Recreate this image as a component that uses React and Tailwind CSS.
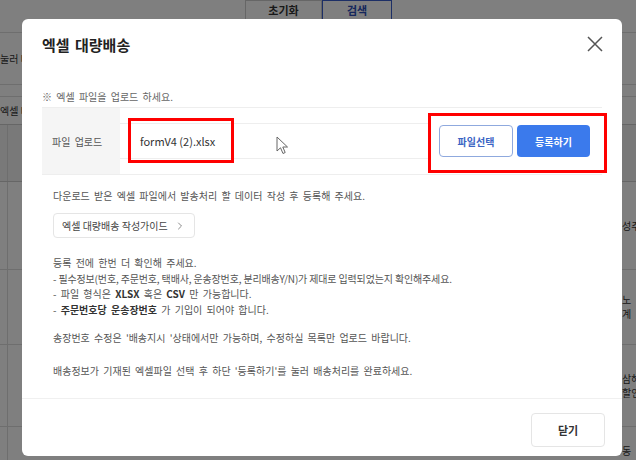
import React from 'react';
import { ChevronRight } from 'lucide-react';

const PageBehind = () => (
  <div className="w-full h-full bg-white text-[10px] text-[#333]">
    <div className="h-[33px] border-b border-[#ddd] flex pl-[245px]">
      <div className="w-[77px] h-[20px] border border-[#ccc] flex items-center justify-center font-bold text-[11px]">초기화</div>
      <div className="w-[70px] h-[20px] border border-[#3a5fcd] flex items-center justify-center font-bold text-[11px] text-[#2d4fb8]">검색</div>
    </div>
    <div className="h-[52px] border-b border-[#ddd] flex items-center pl-0">눌러 배송처리</div>
    <div className="h-[12px] border-b border-[#ddd]" />
    <div className="h-[28px] border-b border-[#ccc] flex items-center">엑셀 배송</div>
    <div className="h-[57px] border-b border-[#ccc] bg-[#f3f3f3] flex">
      <div className="w-[8px] border-r border-[#ddd]" />
    </div>
    <div className="h-[88px] border-b border-[#ddd] flex">
      <div className="w-[8px] border-r border-[#ddd]" />
      <div className="flex-1 flex justify-end items-center">
        <span className="w-[14px] overflow-hidden whitespace-nowrap">성주</span>
      </div>
    </div>
    <div className="h-[75px] border-b border-[#ddd] flex">
      <div className="w-[8px] border-r border-[#ddd]" />
      <div className="flex-1 flex justify-end items-center">
        <span className="w-[14px] overflow-hidden whitespace-nowrap leading-[14px]">노<br />계</span>
      </div>
    </div>
    <div className="h-[82px] border-b border-[#ddd] flex">
      <div className="w-[8px] border-r border-[#ddd]" />
      <div className="flex-1 flex justify-end items-center">
        <span className="w-[14px] overflow-hidden whitespace-nowrap leading-[14px]">삼해<br />할인</span>
      </div>
    </div>
    <div className="h-[33px] flex">
      <div className="w-[8px] border-r border-[#ddd]" />
      <div className="flex-1 flex justify-end items-end pb-[2px]">
        <span className="w-[14px] overflow-hidden whitespace-nowrap">동</span>
      </div>
    </div>
  </div>
);

const Cursor = () => (
  <svg width="13" height="19" viewBox="0 0 13 19" className="absolute left-[276px] top-[136px]">
    <path d="M1 1 L1 15 L4.5 11.8 L7 17.5 L9.2 16.5 L6.8 11 L11.5 11 Z" fill="#fff" stroke="#666" strokeWidth="1" strokeLinejoin="round" />
  </svg>
);

export default function App() {
  return (
    <div className="relative w-[636px] h-[460px] overflow-hidden font-['Noto_Sans_CJK_KR','Noto_Sans',sans-serif]">
      <PageBehind />
      <div className="absolute inset-0 bg-black/50" />

      <div className="absolute left-[22px] top-[19px] w-[600px] h-[437px] bg-white rounded-[6px] flex flex-col">
        {/* header */}
        <div className="relative px-5 pt-[17px]">
          <h2 className="text-[15px] leading-[18px] font-bold text-[#222] [word-spacing:2px]">엑셀 대량배송</h2>
          <button className="absolute right-[19px] top-[17px]">
            <svg width="16" height="16" viewBox="0 0 16 16">
              <path d="M1 1 L15 15 M15 1 L1 15" stroke="#555" strokeWidth="1.5" />
            </svg>
          </button>
        </div>

        {/* body */}
        <div className="px-5 [word-spacing:2px]">
          <p className="mt-[36px] text-[10px] leading-[14px] text-[#666]">※ 엑셀 파일을 업로드 하세요.</p>

          <div className="mt-[3px] h-[68px] flex border-y border-[#eee]">
            <div className="w-[78px] bg-[#f5f5f5] flex items-center pl-[10px] text-[10px] text-[#555]">파일 업로드</div>
            <div className="flex-1 flex items-center pr-[12px]">
              <div className="flex-1 h-9 border-y border-[#eee] flex items-center pl-5 text-[11px] text-[#333] [word-spacing:0px]">formV4 (2).xlsx</div>
              <button className="ml-[11px] w-[74px] h-8 border border-[#8fa9de] rounded-[4px] bg-white text-[10px] font-bold text-[#3a64c4]">파일선택</button>
              <button className="ml-[4px] w-[73px] h-8 rounded-[4px] bg-[#3b7aec] text-[10px] font-bold text-white">등록하기</button>
            </div>
          </div>

          <div className="pl-[11px] text-[10px] text-[#555]">
            <p className="mt-[14px] leading-[14px]">다운로드 받은 엑셀 파일에서 발송처리 할 데이터 작성 후 등록해 주세요.</p>
            <button className="mt-[10px] w-[142px] h-[25px] border border-[#e5e5e5] rounded-[4px] flex items-center pl-2 gap-[6px] text-[10px] text-[#444]">
              엑셀 대량배송 작성가이드
              <ChevronRight size={12} strokeWidth={1.5} className="text-[#666]" />
            </button>
            <div className="mt-[17px] leading-[15.5px]">
              <p>등록 전에 한번 더 확인해 주세요.</p>
              <p className="[word-spacing:0px] tracking-[-0.15px]">- 필수정보(번호, 주문번호, 택배사, 운송장번호, 분리배송Y/N)가 제대로 입력되었는지 확인해주세요.</p>
              <p>- 파일 형식은 <b className="text-[#333]">XLSX</b> 혹은 <b className="text-[#333]">CSV</b> 만 가능합니다.</p>
              <p>- <b className="text-[#333]">주문번호당 운송장번호</b> 가 기입이 되어야 합니다.</p>
            </div>
            <p className="mt-[13px] leading-[15.5px]">송장번호 수정은 '배송지시 '상태에서만 가능하며, 수정하실 목록만 업로드 바랍니다.</p>
            <p className="mt-[17px] leading-[15.5px]">배송정보가 기재된 엑셀파일 선택 후 하단 '등록하기'를 눌러 배송처리를 완료하세요.</p>
          </div>
        </div>

        {/* footer */}
        <div className="mt-auto border-t border-[#f0f0f0] pt-[14px] pb-[9px] pr-[17px] flex justify-end">
          <button className="w-[74px] h-[34px] border border-[#e5e5e5] rounded-[4px] text-[11px] font-bold text-[#333]">닫기</button>
        </div>
      </div>

      {/* annotations */}
      <Cursor />
      <div className="absolute left-[128px] top-[118px] w-[106px] h-[45px] border-[3px] border-[#f00]" />
      <div className="absolute left-[428px] top-[113px] w-[179px] h-[60px] border-[3px] border-[#f00]" />
    </div>
  );
}
